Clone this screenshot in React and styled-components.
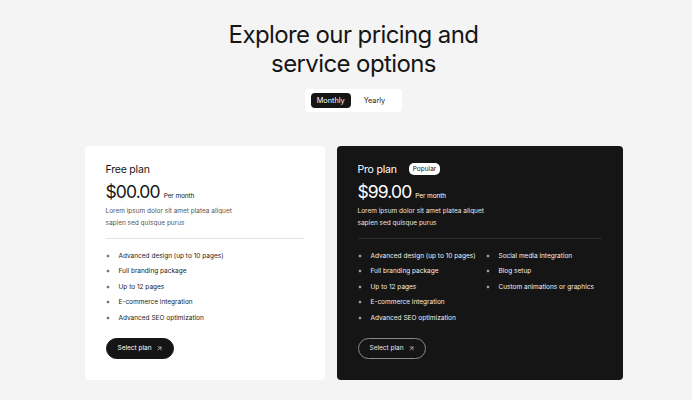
import styled, { createGlobalStyle } from "styled-components"
import { ArrowUpRight } from "lucide-react"

const Global = createGlobalStyle`
	* { box-sizing: border-box; }
	body {
		margin: 0;
		background: #f4f4f4;
		font-family: Inter, "Liberation Sans", sans-serif;
		color: #151515;
	}
`

const Page = styled.main`
	padding: 20px 0 20px 15px;
	display: flex;
	flex-direction: column;
	align-items: center;
`

const Title = styled.h1`
	margin: 0;
	font-size: 24px;
	line-height: 29px;
	font-weight: 400;
	letter-spacing: -0.6px;
	text-align: center;
	color: #161616;
`

const Toggle = styled.div`
	margin-top: 11px;
	display: flex;
	align-items: center;
	background: #fff;
	border-radius: 4px;
	padding: 4px 11px 4px 6px;
`

const ToggleOption = styled.button`
	border: none;
	font-family: inherit;
	font-size: 7.3px;
	padding: 3px 6px;
	border-radius: 4px;
	cursor: pointer;
	background: ${({ $active }) => ($active ? "#151515" : "transparent")};
	color: ${({ $active }) => ($active ? "#fff" : "#222")};
	margin-left: ${({ $active }) => ($active ? "0" : "7px")};
`

const Cards = styled.div`
	margin-top: 34px;
	width: 538px;
	display: grid;
	grid-template-columns: 240px 286px;
	gap: 12px;
`

const Card = styled.section`
	height: 234px;
	border-radius: 4px;
	padding: 16px 21px 0;
	background: ${({ $dark }) => ($dark ? "#151515" : "#fff")};
	color: ${({ $dark }) => ($dark ? "#fff" : "#161616")};
`

const NameRow = styled.div`
	display: flex;
	align-items: center;
	gap: 12px;
	height: 14px;
`

const PlanName = styled.h2`
	margin: 0;
	font-size: 10.5px;
	font-weight: 400;
	letter-spacing: -0.2px;
`

const Badge = styled.span`
	background: #fff;
	color: #151515;
	font-size: 6.5px;
	padding: 2px 4px;
	border-radius: 5px;
`

const PriceRow = styled.div`
	margin-top: 5px;
	display: flex;
	align-items: baseline;
	gap: 4px;
`

const Price = styled.span`
	font-size: 17.5px;
	letter-spacing: -0.9px;
`

const Per = styled.span`
	font-size: 6.5px;
	letter-spacing: -0.1px;
`

const Desc = styled.p`
	margin: 3px 0 0;
	width: 128px;
	font-size: 6.5px;
	line-height: 12px;
	color: ${({ $dark }) => ($dark ? "#e6e6e6" : "#555")};
`

const Divider = styled.hr`
	margin: 9px 0 0;
	border: none;
	border-top: 1px solid ${({ $dark }) => ($dark ? "#2e2e2e" : "#e4e4e4")};
`

const Features = styled.div`
	margin-top: 9px;
	display: grid;
	grid-template-columns: ${({ $cols }) => ($cols === 2 ? "128px 1fr" : "1fr")};
`

const List = styled.ul`
	margin: 0;
	padding: 0;
	list-style: none;
`

const Item = styled.li`
	display: flex;
	align-items: center;
	gap: 9px;
	height: 15.5px;
	font-size: 6.5px;
	color: ${({ $dark }) => ($dark ? "#f0f0f0" : "#222")};
`

const Button = styled.button`
	margin-top: 12px;
	height: 21px;
	padding: 0 10px 0 11px;
	display: inline-flex;
	align-items: center;
	gap: 4px;
	border-radius: 11px;
	font-family: inherit;
	font-size: 6.5px;
	cursor: pointer;
	background: ${({ $outline }) => ($outline ? "transparent" : "#151515")};
	color: ${({ $outline }) => ($outline ? "#e8e8e8" : "#fff")};
	border: 1px solid ${({ $outline }) => ($outline ? "#8a8a8a" : "#151515")};
`

const Sparkle = () => (
	<svg width="4" height="4" viewBox="0 0 10 10" fill="currentColor">
		<path d="M5 0 L6 4 L10 5 L6 6 L5 10 L4 6 L0 5 L4 4 Z" />
	</svg>
)

const base = [
	"Advanced design (up to 10 pages)",
	"Full branding package",
	"Up to 12 pages",
	"E-commerce integration",
	"Advanced SEO optimization",
]

const extra = ["Social media integration", "Blog setup", "Custom animations or graphics"]

const FeatureList = ({ items, dark }) => (
	<List>
		{items.map((t) => (
			<Item key={t} $dark={dark}>
				<Sparkle />
				{t}
			</Item>
		))}
	</List>
)

const App = () => {
	return (
		<>
			<Global />
			<Page>
				<Title>
					Explore our pricing and
					<br />
					service options
				</Title>
				<Toggle>
					<ToggleOption $active>Monthly</ToggleOption>
					<ToggleOption>Yearly</ToggleOption>
				</Toggle>
				<Cards>
					<Card>
						<NameRow>
							<PlanName>Free plan</PlanName>
						</NameRow>
						<PriceRow>
							<Price>$00.00</Price>
							<Per>Per month</Per>
						</PriceRow>
						<Desc>Lorem ipsum dolor sit amet platea aliquet sapien sed quisque purus</Desc>
						<Divider />
						<Features>
							<FeatureList items={base} />
						</Features>
						<Button>
							Select plan <ArrowUpRight size={7} strokeWidth={2} />
						</Button>
					</Card>
					<Card $dark>
						<NameRow>
							<PlanName>Pro plan</PlanName>
							<Badge>Popular</Badge>
						</NameRow>
						<PriceRow>
							<Price>$99.00</Price>
							<Per>Per month</Per>
						</PriceRow>
						<Desc $dark>Lorem ipsum dolor sit amet platea aliquet sapien sed quisque purus</Desc>
						<Divider $dark />
						<Features $cols={2}>
							<FeatureList items={base} dark />
							<FeatureList items={extra} dark />
						</Features>
						<Button $outline>
							Select plan <ArrowUpRight size={7} strokeWidth={2} />
						</Button>
					</Card>
				</Cards>
			</Page>
		</>
	)
}

export default App
